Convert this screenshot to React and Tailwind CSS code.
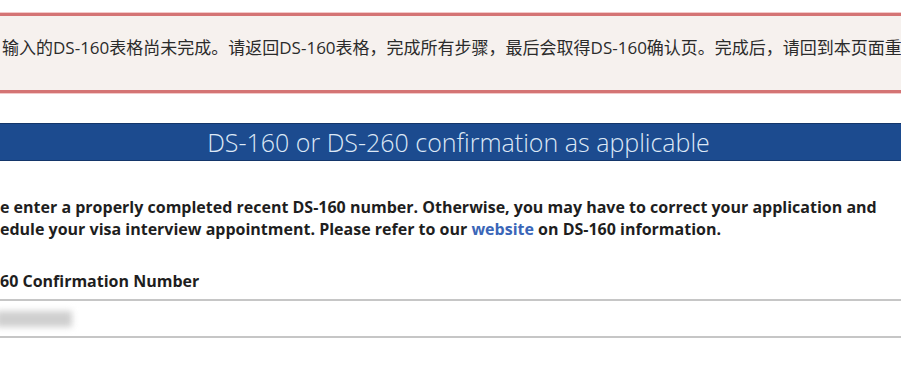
import React from "react";

const Alert = () => (
  <div className="pt-[13px]">
    <div className="border-y-[3px] border-[#d47474] bg-[#f6f1ee] h-[80px] flex items-center shadow-[0_0_0_1px_#f3c9c9]">
      <p className="whitespace-nowrap overflow-hidden pl-[2px] text-[17px] text-[#2b2b2b] font-['Open_Sans','Noto_Sans_CJK_SC',sans-serif] -mt-[10px]">
        输入的DS-160表格尚未完成。请返回DS-160表格，完成所有步骤，最后会取得DS-160确认页。完成后，请回到本页面重新
      </p>
    </div>
  </div>
);

const Header = () => (
  <div className="mt-[30px] h-[38px] bg-[#1c4b8f] border-y border-[#14366a] flex items-center justify-center">
    <h2 className="text-[25px] font-light text-[#dde8f6] pl-[16px] leading-none font-['Open_Sans',sans-serif]">
      DS-160 or DS-260 confirmation as applicable
    </h2>
  </div>
);

const App = () => {
  return (
    <div className="w-[901px] h-[383px] overflow-hidden bg-white font-['Open_Sans',sans-serif]">
      <Alert />
      <Header />
      <div className="mt-[35px] text-[16px] font-bold text-[#1e1e1e] leading-[22px] whitespace-nowrap">
        <p>
          e enter a properly completed recent DS-160 number. Otherwise, you may have to correct your application and
        </p>
        <p>
          edule your visa interview appointment. Please refer to our{" "}
          <a href="#" className="text-[#3a66b8]">website</a> on DS-160 information.
        </p>
      </div>
      <div className="mt-[30px]">
        <label className="block text-[16px] font-bold text-[#1e1e1e] leading-[22px]">
          60 Confirmation Number
        </label>
        <div className="mt-[7px] h-[39px] border-t-2 border-b-2 border-[#c6c6c6] flex items-center">
          <div className="w-[76px] h-[16px] bg-[#cfcfcf] blur-[3px] -ml-[4px]"></div>
        </div>
      </div>
    </div>
  );
};

export default App;
